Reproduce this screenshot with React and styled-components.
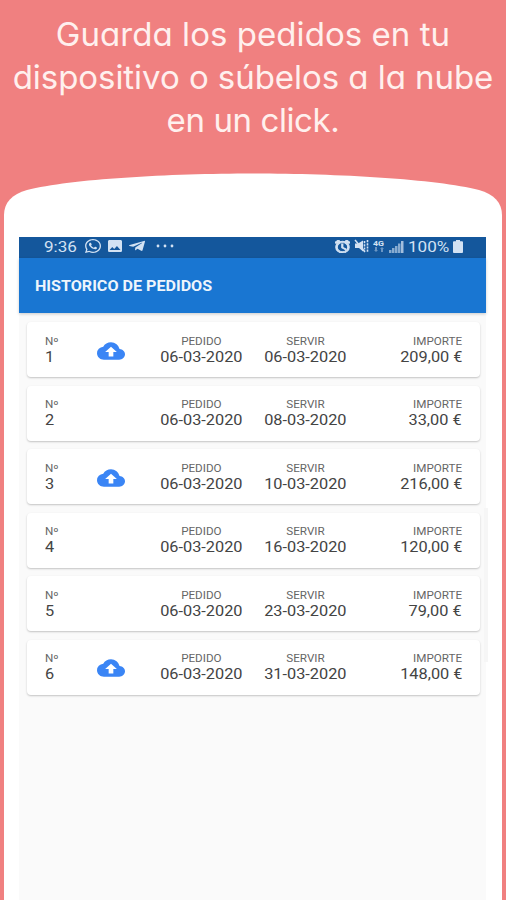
import React from "react";
import styled, { createGlobalStyle } from "styled-components";
import { FaWhatsapp, FaTelegramPlane } from "react-icons/fa";
import { MdBackup, MdImage, MdAlarm, MdBatteryFull } from "react-icons/md";

const GlobalStyle = createGlobalStyle`
  * {
    box-sizing: border-box;
  }
  body {
    margin: 0;
    background-color: #f08080;
    font-family: Roboto, "Liberation Sans", sans-serif;
  }
`;

const Page = styled.div`
  width: 506px;
  height: 900px;
  overflow: hidden;
  background-color: #f08080;
  display: flex;
  flex-direction: column;
`;

const Headline = styled.h1`
  margin: 0;
  height: 173px;
  padding-top: 13px;
  display: flex;
  flex-direction: column;
  align-items: center;
  font-family: Inter, "Open Sans", sans-serif;
  font-feature-settings: "cv11", "ss03";
  font-size: 33px;
  font-weight: 400;
  line-height: 43px;
  color: #fff0ee;
  white-space: nowrap;
`;

const HeadlineRow = styled.span`
  letter-spacing: ${(props) => props.$spacing || 0}px;
`;

// ======================================================
//  Phone

const Phone = styled.div`
  margin-left: 4px;
  width: 498px;
  flex: 1;
  display: flex;
  flex-direction: column;
`;

const PhoneTop = styled.svg`
  display: block;
  width: 498px;
  height: 64px;
  flex: none;
`;

const PhoneBody = styled.div`
  flex: 1;
  padding: 0 16px 0 15px;
  background-color: white;
  display: flex;
`;

const Screen = styled.div`
  flex: 1;
  position: relative;
  background-color: #fafafa;
`;

const ScrollThumb = styled.div`
  position: absolute;
  top: 271px;
  right: -2px;
  width: 4px;
  height: 154px;
  background-color: #f6f6f6;
`;

// the device font is wide, so text is stretched from its own edge
const Wide = styled.span`
  display: inline-block;
  transform: scaleX(${(props) => props.$x || 1.165});
  transform-origin: ${(props) => props.$from || "left"} center;
`;

const StatusBar = styled.div`
  height: 21px;
  padding: 0 23px 3px 25px;
  background-color: #14579c;
  color: #d3e2f3;
  display: flex;
  align-items: center;
  justify-content: space-between;
`;

const StatusGroup = styled.div`
  display: flex;
  align-items: center;
  gap: ${(props) => props.$gap}px;

  svg {
    display: block;
    flex: none;
  }
`;

const Clock = styled.span`
  width: 34px;
  padding-top: 1px;
  font-size: 14px;
  line-height: 18px;
`;

const Percent = styled(Clock)`
  width: 41px;
`;

const WhatsappIcon = styled(FaWhatsapp)`
  width: 16px;
  height: 14px;
`;

const PictureIcon = styled(MdImage)`
  width: 14px;
  height: 12px;
`;

const TelegramIcon = styled(FaTelegramPlane)`
  width: 16px;
  height: 12px;
`;

const AlarmIcon = styled(MdAlarm)`
  width: 15px;
  height: 13px;
  stroke: currentColor;
  stroke-width: 1.4px;
`;

const BatteryIcon = styled(MdBatteryFull)`
  width: 10px;
  height: 13px;
`;

const Dots = styled.svg`
  margin-left: 4px;
`;

const AppBar = styled.div`
  height: 55px;
  padding-left: 16px;
  background-color: #1976d2;
  box-shadow: 0 1px 3px rgba(0, 0, 0, 0.2);
  color: #eef5fc;
  font-size: 14px;
  font-weight: 700;
  display: flex;
  align-items: center;
`;

// ======================================================
//  Orders

const OrderList = styled.div`
  padding: 9px 6px 0 8px;
  display: flex;
  flex-direction: column;
  gap: 8.6px;
`;

const OrderCard = styled.div`
  position: relative;
  z-index: 1;
  height: 55px;
  padding: 0 18px;
  background-color: white;
  border-radius: 4px;
  box-shadow: 0 1px 2px rgba(0, 0, 0, 0.22);
  display: grid;
  grid-template-columns: 52px 52px 104px 104px 1fr;
  align-items: center;
`;

const Field = styled.div`
  display: flex;
  flex-direction: column;
  align-items: ${(props) => props.$align || "flex-start"};
`;

const Label = styled(Wide)`
  font-size: 10px;
  line-height: 14px;
  color: #666;
`;

const Value = styled(Wide)`
  font-size: 14px;
  line-height: 16px;
  color: #444;
`;

const CloudHolder = styled.div`
  height: 26px;
  margin-top: 2px;
`;

const CloudIcon = styled(MdBackup)`
  display: block;
  width: 28px;
  height: 26px;
  color: #3a85f5;
`;

const orders = [
  { id: 1, servir: "06-03-2020", importe: "209,00 €", cloud: true },
  { id: 2, servir: "08-03-2020", importe: "33,00 €", cloud: false },
  { id: 3, servir: "10-03-2020", importe: "216,00 €", cloud: true },
  { id: 4, servir: "16-03-2020", importe: "120,00 €", cloud: false },
  { id: 5, servir: "23-03-2020", importe: "79,00 €", cloud: false },
  { id: 6, servir: "31-03-2020", importe: "148,00 €", cloud: true },
];

const MuteIcon = () => (
  <svg width="15" height="14" viewBox="0 0 15 14" fill="none">
    <path d="M1 4.500h3l5-3v11L5 9H1z" fill="currentColor" />
    <path d="M1 1l10 12" stroke="currentColor" strokeWidth="1.5" />
    <path
      d="M10.5 2v10M13.5 1v12"
      stroke="currentColor"
      strokeWidth="1.6"
      strokeDasharray="2.2 1"
    />
  </svg>
);

const NetworkIcon = () => (
  <svg width="12" height="14" viewBox="0 0 12 14">
    <text
      x="0"
      y="6.5"
      fontSize="7.5"
      fontWeight="700"
      fill="currentColor"
      textLength="11"
      lengthAdjust="spacingAndGlyphs"
    >
      4G
    </text>
    <path
      d="M2 8h2v3h1l-2 2-2-2h1zM8 13h2v-3h1L9 8 7 10h1z"
      fill="currentColor"
      opacity="0.45"
    />
  </svg>
);

const SignalIcon = () => (
  <svg width="15" height="13" viewBox="0 0 15 13" fill="currentColor">
    <path
      d="M0 10h2.500v3H0zM3 8h2.500v5H3zM6 6h2.500v7H6zM9 3.500h2.500v9.500H9z"
      opacity="0.6"
    />
    <path d="M12 1h2.500v12H12z" opacity="0.75" />
  </svg>
);

const DotsIcon = () => (
  <Dots width="18" height="4" viewBox="0 0 18 4" fill="currentColor">
    <circle cx="2" cy="2" r="1.4" />
    <circle cx="9" cy="2" r="1.4" />
    <circle cx="16" cy="2" r="1.4" />
  </Dots>
);

const Order = ({ order }) => {
  return (
    <OrderCard>
      <Field>
        <Label>Nº</Label>
        <Value>{order.id}</Value>
      </Field>
      <CloudHolder>
        {order.cloud && <CloudIcon preserveAspectRatio="none" />}
      </CloudHolder>
      <Field $align="center">
        <Label $from="center">PEDIDO</Label>
        <Value $from="center">06-03-2020</Value>
      </Field>
      <Field $align="center">
        <Label $from="center">SERVIR</Label>
        <Value $from="center">{order.servir}</Value>
      </Field>
      <Field $align="flex-end">
        <Label $from="right">IMPORTE</Label>
        <Value $from="right">{order.importe}</Value>
      </Field>
    </OrderCard>
  );
};

const App = () => {
  return (
    <Page>
      <GlobalStyle />
      <Headline>
        <HeadlineRow $spacing={0.05}>Guarda los pedidos en tu</HeadlineRow>
        <HeadlineRow $spacing={-0.05}>dispositivo o súbelos a la nube</HeadlineRow>
        <HeadlineRow $spacing={-0.4}>en un click.</HeadlineRow>
      </Headline>
      <Phone>
        <PhoneTop viewBox="0 0 498 64">
          <path
            d="M0 64V42C0 30 8 21 23 17C66 6 166 0.500 249 0.500S432 6 475 17C490 21 498 30 498 42V64Z"
            fill="white"
          />
        </PhoneTop>
        <PhoneBody>
          <Screen>
            <StatusBar>
              <StatusGroup $gap={7}>
                <Clock>
                  <Wide $x={1.22}>9:36</Wide>
                </Clock>
                <WhatsappIcon
                  viewBox="0 32 448 448"
                  preserveAspectRatio="none"
                />
                <PictureIcon viewBox="3 3 18 18" preserveAspectRatio="none" />
                <TelegramIcon
                  viewBox="0 32 448 448"
                  preserveAspectRatio="none"
                />
                <DotsIcon />
              </StatusGroup>
              <StatusGroup $gap={4}>
                <AlarmIcon viewBox="2 2 20 20" preserveAspectRatio="none" />
                <MuteIcon />
                <NetworkIcon />
                <SignalIcon />
                <Percent>
                  <Wide $x={1.22}>100%</Wide>
                </Percent>
                <BatteryIcon viewBox="7 2 10 20" preserveAspectRatio="none" />
              </StatusGroup>
            </StatusBar>
            <AppBar>
              <Wide $x={1.15}>HISTORICO DE PEDIDOS</Wide>
            </AppBar>
            <OrderList>
              {orders.map((order) => (
                <Order key={order.id} order={order} />
              ))}
            </OrderList>
            <ScrollThumb />
          </Screen>
        </PhoneBody>
      </Phone>
    </Page>
  );
};

export default App;
